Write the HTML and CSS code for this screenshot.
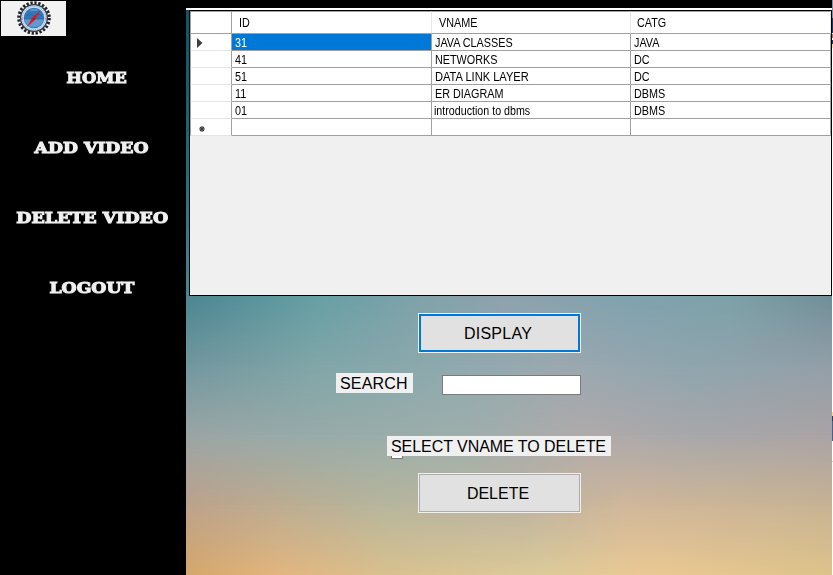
FILE: index.html
```
<!DOCTYPE html>
<html lang="en">
<head>
<meta charset="utf-8">
<title>Delete Video</title>
<link rel="stylesheet" href="styles.css">
</head>
<body>
<div class="app">
  <aside class="sidebar">
    <div class="logo">
      <svg width="65" height="35" viewBox="0 0 65 35">
        <circle cx="33" cy="17" r="15.3" fill="none" stroke="#20242a" stroke-width="3" stroke-dasharray="2.3 1.7"/>
        <circle cx="33" cy="17" r="14" fill="#263442"/>
        <circle cx="33" cy="17" r="12.8" fill="#d3e0ec"/>
        <circle cx="33" cy="17" r="11.6" fill="none" stroke="#7ba3c8" stroke-width="1" stroke-dasharray="1 1"/>
        <circle cx="33" cy="17" r="10.3" fill="#2e78bc"/>
        <path d="M23 18h20a10.2 10.2 0 0 1-20 0z" fill="#5e9bd2"/>
        <path d="M23 18h20M25 15l4-2 4 2 4-2 4 2" fill="none" stroke="#2a6298" stroke-width=".7"/>
        <path d="M29.500 9h7" stroke="#9fc4e4" stroke-width=".8"/>
        <path d="M39.500 9.500L34.300 18.500 26 26 31.200 16.500z" fill="#e8151d"/>
        <circle cx="32.800" cy="18" r=".9" fill="#553344"/>
        <path d="M20 18h1.500M44.500 18h1.500" stroke="#e03a40" stroke-width="1.200"/>
      </svg>
    </div>
    <nav class="menu">
      <a class="w-home">HOME</a>
      <a class="w-add">ADD VIDEO</a>
      <a class="w-del">DELETE VIDEO</a>
      <a class="w-out">LOGOUT</a>
    </nav>
  </aside>
  <main class="content">
    <div class="sky sky-e"></div><div class="sky sky-d"></div><div class="sky sky-c"></div><div class="sky sky-b"></div><div class="sky sky-a"></div>
    <div class="titlebar"></div>
    <section class="gridview">
      <div class="row head"><div class="sel"></div><div><span>ID</span></div><div><span>VNAME</span></div><div class="catg"><span>CATG</span></div></div>
      <div class="row"><div class="sel"><svg width="6" height="10"><path d="M0 0l5.500 5L0 10z" fill="#404040"/></svg></div><div class="active"><span>31</span></div><div><span>JAVA CLASSES</span></div><div><span>JAVA</span></div></div>
      <div class="row"><div class="sel"></div><div><span>41</span></div><div><span>NETWORKS</span></div><div><span>DC</span></div></div>
      <div class="row"><div class="sel"></div><div><span>51</span></div><div><span class="wide">DATA LINK LAYER</span></div><div><span>DC</span></div></div>
      <div class="row"><div class="sel"></div><div><span>11</span></div><div><span>ER DIAGRAM</span></div><div><span>DBMS</span></div></div>
      <div class="row"><div class="sel"></div><div><span>01</span></div><div><span class="lower">introduction to dbms</span></div><div><span>DBMS</span></div></div>
      <div class="row"><div class="sel star"><svg width="6" height="6"><path d="M3 0v6M0 3h6M1 1l4 4M5 1L1 5" stroke="#404040" stroke-width="1.1"/></svg></div><div></div><div></div><div></div></div>
    </section>
    <section class="form">
      <button class="btn primary">DISPLAY</button>
      <div class="search"><label class="label">SEARCH</label><input type="text"></div>
      <div class="label prompt">SELECT VNAME TO DELETE</div>
      <button class="btn delete">DELETE</button>
    </section>
  </main>
  <div class="edge"></div>
</div>
</body>
</html>
```
FILE: styles.css
```
* { box-sizing: border-box; }
body { margin: 0; overflow: hidden; background: #000; font-family: "Liberation Sans", Arial, sans-serif; }
.app { display: flex; width: 833px; height: 575px; }

.sidebar { width: 186px; background: #000; padding: 1px 0 0 1px; }
.logo { width: 65px; height: 35px; background: #f2f2f2; }
.logo svg { display: block; }
.menu { display: flex; flex-direction: column; align-items: center; padding-top: 32px; margin-left: -3px; gap: 50px; }
.menu a { height: 20px; color: #f0f0f0; font: bold 15px/20px "DejaVu Serif", serif; -webkit-text-stroke: 1px #f0f0f0; white-space: nowrap; transform: scaleX(1.15); }
.menu .w-home { margin-left: 9px; transform: scaleX(1.09); }
.menu .w-del { transform: scaleX(1.165); }

.content { position: relative; width: 646px; display: flex; flex-direction: column; }
.titlebar { height: 10px; background: #000; border-bottom: 2px solid #fff; position: relative; }

/* Stacked horizontal colour bands, each fading into the one below. */
.sky { position: absolute; left: 0; right: 0; top: 0; }
.sky-e { height: 575px; background: linear-gradient(90deg, #d5a86b, #e3b57e 14%, #d9c18f 32%, #dccb99 54%, #ebc993 72%, #dec38a); }
.sky-d { height: 575px; background: linear-gradient(90deg, #bda28c, #bdac91 14%, #b6b69d 32%, #bdb3a0 52%, #d0b79a 68%, #c7b393); -webkit-mask-image: linear-gradient(#000 505px, transparent); mask-image: linear-gradient(#000 505px, transparent); }
.sky-c { height: 505px; background: linear-gradient(90deg, #9ba5a5, #97aba9 20%, #9dafac 42%, #b0aaab 62%, #a7a7aa 80%, #aaa3a5); -webkit-mask-image: linear-gradient(#000 435px, transparent); mask-image: linear-gradient(#000 435px, transparent); }
.sky-b { height: 435px; background: linear-gradient(90deg, #71979e, #80a6a8 20%, #8ca9ad 38%, #9ba8b0 58%, #8fa5ae 78%, #929fa8); -webkit-mask-image: linear-gradient(#000 365px, transparent); mask-image: linear-gradient(#000 365px, transparent); }
.sky-a { height: 365px; background: linear-gradient(90deg, #4b8590, #659fa5 20%, #82a2aa 38%, #8da2ad 50%, #7fa2ae 68%, #7da1a8 84%, #718e98); -webkit-mask-image: linear-gradient(#000 296px, transparent); mask-image: linear-gradient(#000 296px, transparent); }
.sky-a::before { content: ""; display: block; width: 3px; height: 296px; background: linear-gradient(#0f5265, #1d6574 45%, #4b8590); }

.gridview { position: relative; margin-left: 3px; width: 643px; height: 286px; border: 1px solid #000; background: #f0f0f0; color: #000; }
.row { display: grid; grid-template-columns: 42px 200px 199px 200px; height: 17px; background: #fff; }
.row > div { border-right: 1px solid #a0a0a0; border-bottom: 1px solid #a0a0a0; padding-left: 3px; height: 17px; font-size: 12px; line-height: 18px; white-space: nowrap; overflow: hidden; }
.row span { display: inline-block; transform: scaleX(.9); transform-origin: left; }
.row .wide { transform: scaleX(.925); }
.row .lower { margin-left: -1px; transform: scaleX(.89); }
.row > .sel { border-left: 1px solid #a0a0a0; border-bottom-color: #e5e5e5; padding: 4px 0 0 6px; line-height: 0; }
.row > .star { padding: 7px 0 0 8px; }
.row > .active { background: #0078d7; color: #fff; }
.row.head { height: 23px; }
.row.head > div { height: 23px; padding-left: 7px; line-height: 22px; border-top: 1px solid #a0a0a0; border-right-color: #e5e5e5; }
.row.head > .catg { padding-left: 6px; }
.row.head > .sel { border-bottom-color: #a0a0a0; border-right-color: #a0a0a0; }

.form { position: relative; display: flex; flex-direction: column; align-items: flex-start; padding-top: 17px; color: #000; }
.btn { width: 163px; height: 40px; margin: 0 0 0 232px; padding: 2px 3px 0 0; border: 1px solid #f0f0f0; background: #e1e1e1; box-shadow: inset 0 0 0 1px #adadad; font: 16px/36px "Liberation Sans", Arial, sans-serif; color: #000; }
.primary { box-shadow: inset 0 0 0 2px #0078d7; letter-spacing: .25px; }
.search { display: flex; height: 22px; margin: 20px 0 0 150px; }
.search .label { letter-spacing: .2px; }
.label { height: 20px; width: 77px; padding-left: 4px; background: #f0f0f0; font-size: 16px; line-height: 21px; white-space: nowrap; }
.search input { width: 139px; height: 20px; margin: 2px 0 0 29px; padding: 0; border: 1px solid #7a7a7a; background: #fff; }
.prompt { position: relative; width: 224px; margin: 41px 0 17px 201px; letter-spacing: -.05px; }
.prompt::after { content: ""; position: absolute; left: 4px; top: 20px; width: 10px; height: 2px; background: #fff; border: solid #7a7a7a; border-width: 0 1px 1px; }

.edge { width: 1px; background: linear-gradient(#7890b0 0 18px, #173766 18px 33px, #fff 33px 34px, #b26b60 34px 38px, #fff 38px 40px, #173766 40px 44px, #ffe08a 44px 48px, #fff 48px 412px, #ffd878 412px 416px, #213e69 416px 421px, #42628f 421px 441px, #fff 441px 461px, #ccc 461px 462px, #fff 462px); }
```
